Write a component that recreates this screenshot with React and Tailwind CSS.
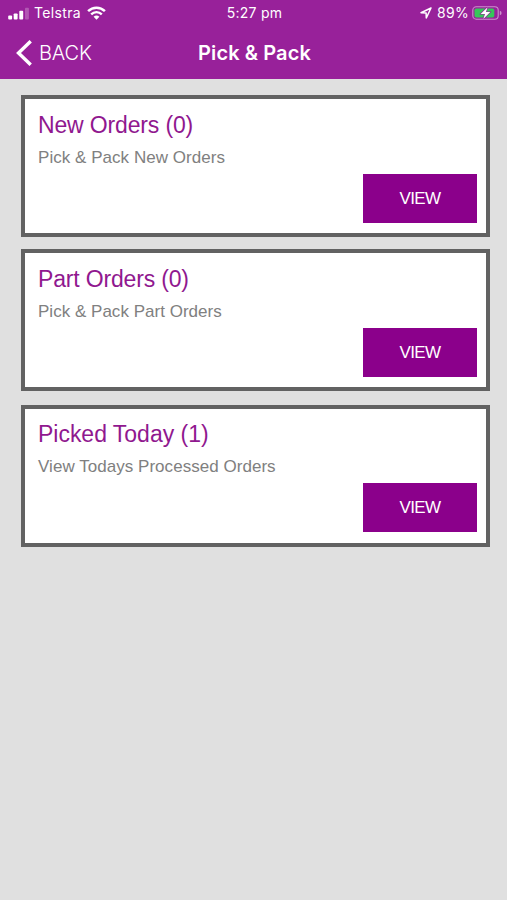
const cards = [
  { title: 'New Orders (0)', text: 'Pick & Pack New Orders', box: 'pt-[12px]', titleStyle: 'tracking-[-0.15px]', textStyle: 'tracking-[0.04px]' },
  { title: 'Part Orders (0)', text: 'Pick & Pack Part Orders', box: 'mt-[12px] pt-[12px]', titleStyle: 'tracking-[-0.17px]', textStyle: 'tracking-[0.02px]' },
  { title: 'Picked Today (1)', text: 'View Todays Processed Orders', box: 'mt-[14px] pt-[11px]', titleStyle: 'tracking-[-0.02px]', textStyle: 'tracking-[0.04px]' },
];

function Signal() {
  return (
    <svg className="block h-[13px] w-[22px]" viewBox="0 0 22 13" fill="#fff">
      <rect x="0.2" y="8.6" width="3.9" height="3.9" rx="0.9" />
      <rect x="5.7" y="6.4" width="3.9" height="6.1" rx="0.9" />
      <rect x="11.3" y="3.8" width="3.9" height="8.7" rx="0.9" />
      <rect x="17" y="0.8" width="3.9" height="11.7" rx="0.9" opacity="0.25" />
    </svg>
  );
}

function Wifi() {
  return (
    <svg className="block h-[14px] w-[19px]" viewBox="0 0 19 14" fill="none" stroke="#fff">
      <path d="M1.1 5.1C5.8 0.5 13.2 0.5 17.9 5.1" strokeWidth="2.5" />
      <path d="M4.2 8.3C7.2 5.4 11.8 5.4 14.8 8.3" strokeWidth="2.4" />
      <path d="M9.5 13.7L6.6 10.7C8.3 9.2 10.7 9.2 12.4 10.7Z" fill="#fff" stroke="none" />
    </svg>
  );
}

function Location() {
  return (
    <svg className="block h-[12px] w-[12px]" viewBox="0 0 12 12" fill="none" stroke="#fff" strokeWidth="1.5" strokeLinejoin="round">
      <path d="M11 1L1 5.7L6.1 6L6.3 11Z" />
    </svg>
  );
}

function Battery() {
  return (
    <svg className="block h-[14px] w-[31px]" viewBox="0 0 31 14">
      <rect x="0.8" y="0.8" width="25.4" height="12.4" rx="3.4" fill="none" stroke="#fff" strokeOpacity="0.5" strokeWidth="1.1" />
      <path d="M27.8 4.7Q29.6 5.2 29.6 7T27.8 9.3Z" fill="#fff" opacity="0.5" />
      <rect x="2.5" y="2.5" width="19.8" height="9" rx="1.8" fill="#35c759" />
      <path d="M15.6 1.2L8.6 8H13L11.3 12.9L18.3 6.1H13.9Z" fill="#fff" stroke="#98219a" strokeWidth="1.2" paintOrder="stroke" />
    </svg>
  );
}

function Card({ title, text, box, titleStyle, textStyle }) {
  return (
    <section className={`flex h-[142px] flex-col border-4 border-[#626262] bg-white pl-[13px] pr-[9px] ${box}`}>
      <h2 className={`text-[23px] leading-[28px] text-[#90188f] ${titleStyle}`}>{title}</h2>
      <p className={`mt-[9px] text-[17px] leading-[20px] text-[#808080] ${textStyle}`}>{text}</p>
      <button className="mt-[6px] h-[49px] w-[114px] self-end bg-[#8b008b] text-[17px] tracking-[-0.6px] text-white">VIEW</button>
    </section>
  );
}

export default function App() {
  return (
    <div className="flex h-[900px] w-[507px] flex-col overflow-hidden bg-[#e0e0e0] font-['Liberation_Sans',Arial,sans-serif]">
      <header className="h-[79px] bg-[#98219a] font-[Inter,sans-serif] text-white">
        <div className="grid h-[26px] grid-cols-3 items-center text-[14px] leading-[26px]">
          <div className="flex items-center pl-[8px]">
            <Signal />
            <span className="ml-[4px] w-[53px] tracking-[0.35px]">Telstra</span>
            <Wifi />
          </div>
          <span className="pl-[2px] text-center tracking-[0.25px]">5:27 pm</span>
          <div className="flex items-center justify-end pr-[4px]">
            <Location />
            <span className="ml-[5px] w-[35px] tracking-[0.3px]">89%</span>
            <Battery />
          </div>
        </div>
        <div className="grid h-[53px] grid-cols-3 items-center">
          <div className="flex items-center pl-[16px]">
            <svg className="block h-[26px] w-[16px]" viewBox="0 0 16 26" fill="none" stroke="#fff" strokeWidth="3.4">
              <path d="M14.7 1.2L2.5 13L14.7 24.8" />
            </svg>
            <span className="ml-[7px] text-[20px] font-light tracking-[-0.15px]">BACK</span>
          </div>
          <h1 className="whitespace-nowrap pl-[2px] text-center text-[20px] font-semibold tracking-[0.1px]">Pick &amp; Pack</h1>
        </div>
      </header>
      <main className="flex flex-col pl-[21px] pr-[17px] pt-[16px]">
        {cards.map((card) => <Card key={card.title} {...card} />)}
      </main>
    </div>
  );
}
